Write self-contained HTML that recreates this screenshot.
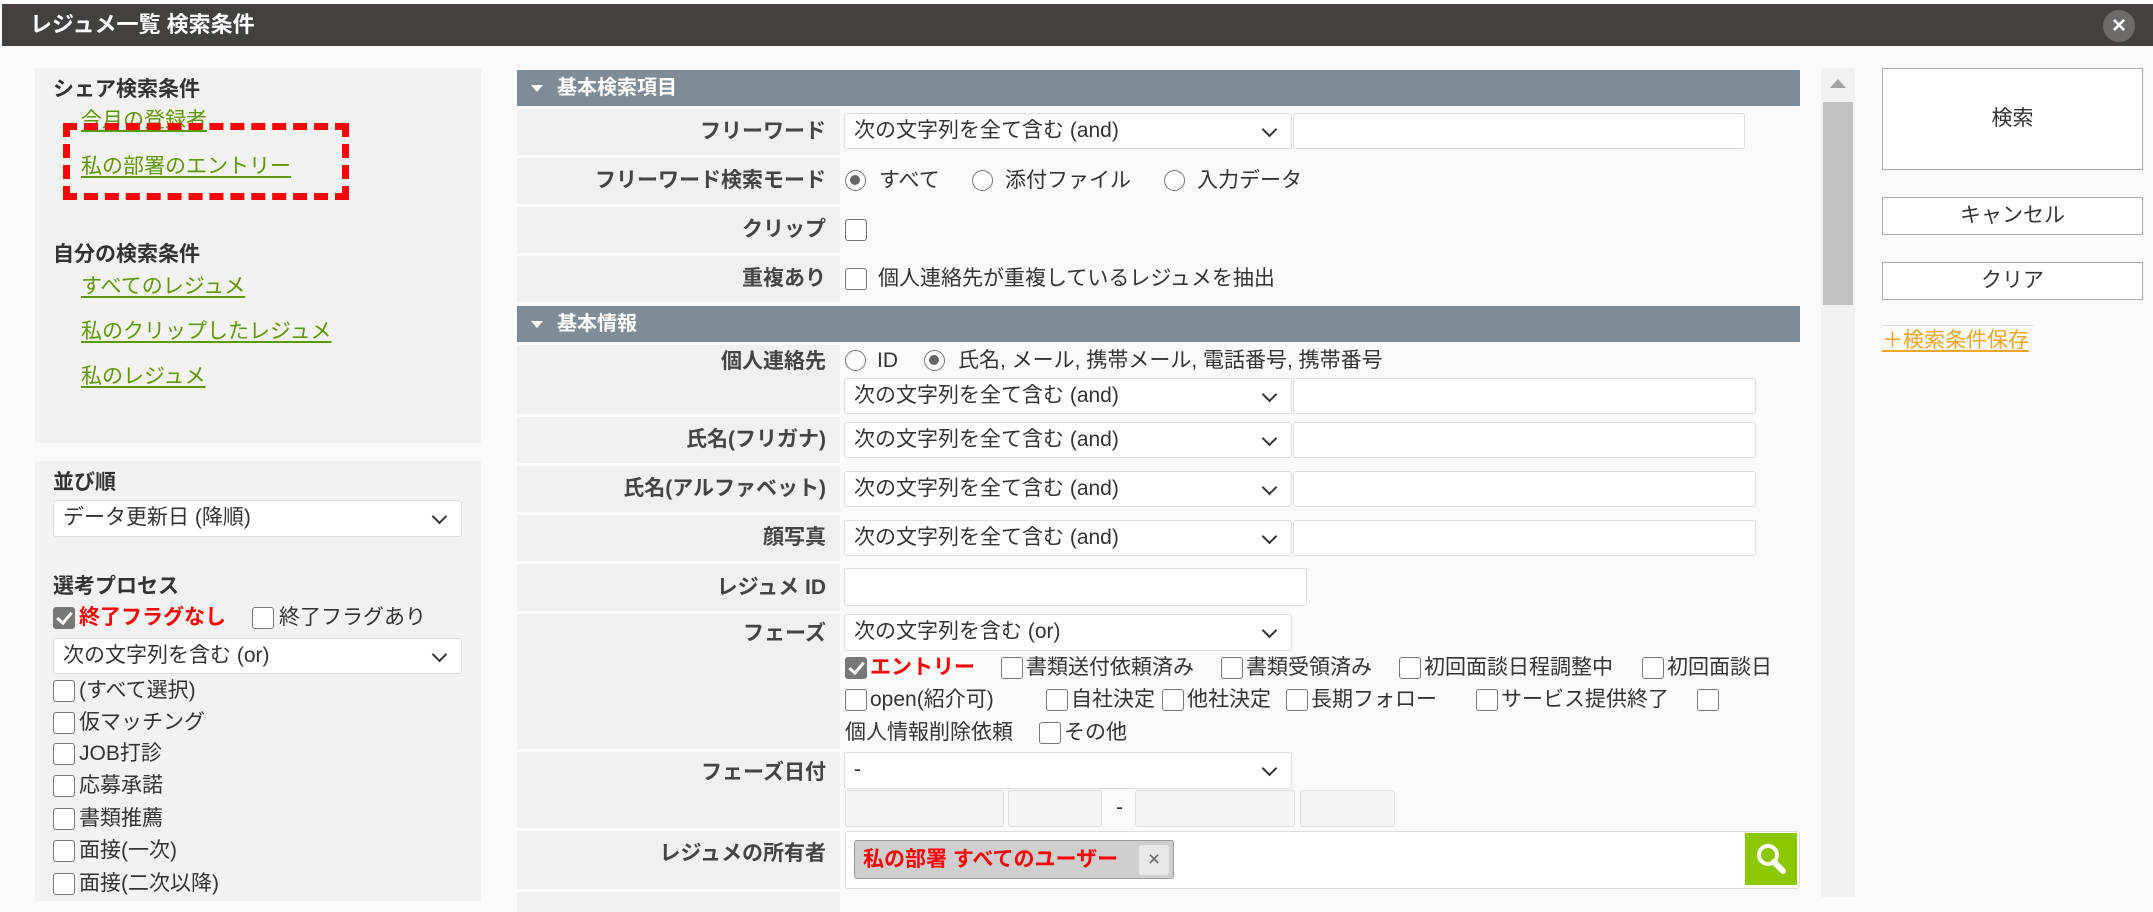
<!DOCTYPE html>
<html><head><meta charset="utf-8"><style>
*{box-sizing:border-box;margin:0;padding:0}
body{width:2153px;height:897px;overflow:hidden;background:#fafafa;font-family:"Liberation Sans","Noto Sans CJK JP",sans-serif;font-size:21px;color:#333;position:relative}
.a{position:absolute;white-space:nowrap}
.t{line-height:22px}
.lk{color:#5f9700;text-decoration:underline;text-underline-offset:3px}
.b{font-weight:bold}
.hdr{position:absolute;left:517px;width:1283px;height:36px;background:#7f8c97;color:#fff;font-weight:bold;font-size:20px;line-height:36px;padding-left:40px}
.hdr:before{content:"";position:absolute;left:14px;top:15px;border-left:6px solid transparent;border-right:6px solid transparent;border-top:7px solid #fff}
.lab{position:absolute;left:517px;width:323px;background:#f0f0f0;text-align:right;padding-right:14px;font-weight:bold;color:#444}
.sel{position:absolute;background:#fff;border:1px solid #ddd;border-radius:3px;padding-left:9px;line-height:34px;height:36px;color:#333}
.sel:after{content:"";position:absolute;right:16px;top:10px;width:9px;height:9px;border-right:2px solid #333;border-bottom:2px solid #333;transform:rotate(45deg)}
.inp{position:absolute;background:#fff;border:1px solid #ddd;border-radius:3px;height:36px}
.cb{position:absolute;width:22px;height:22px;border:1.5px solid #777;border-radius:3px;background:#fff}
.cb.on{background:#777;border-color:#777}
.cb.on:after{content:"";position:absolute;left:6px;top:1px;width:6px;height:12px;border-right:3px solid #fff;border-bottom:3px solid #fff;transform:rotate(40deg)}
.rd{position:absolute;width:21px;height:21px;border:1.5px solid #777;border-radius:50%;background:#fff}
.rd.on:after{content:"";position:absolute;left:4px;top:4px;width:10px;height:10px;border-radius:50%;background:#666}
.btn{position:absolute;left:1882px;width:261px;border:1.5px solid #aaa;background:#fff;text-align:center;color:#333}
</style></head><body>
<div class="a" style="left:2px;top:4px;width:2151px;height:42px;background:#454040"></div>
<div class="a b" style="left:30px;top:9px;color:#fff;font-size:22px;line-height:32px">レジュメ一覧 検索条件</div>
<div class="a" style="left:2103px;top:10px;width:32px;height:32px;border-radius:50%;background:#6e6b6b;color:#fff;text-align:center;line-height:32px;font-size:24px;font-weight:bold">×</div>

<div class="a" style="left:35px;top:68px;width:446px;height:375px;background:#f2f2f2"></div>
<div class="a t b" style="left:53px;top:79px">シェア検索条件</div>
<div class="a t lk" style="left:81px;top:110px">今月の登録者</div>
<div class="a" style="left:63px;top:123px;width:286px;height:77px;border:7px dashed #f00"></div>
<div class="a t lk" style="left:81px;top:156px">私の部署のエントリー</div>
<div class="a t b" style="left:53px;top:244px">自分の検索条件</div>
<div class="a t lk" style="left:81px;top:276px">すべてのレジュメ</div>
<div class="a t lk" style="left:81px;top:321px">私のクリップしたレジュメ</div>
<div class="a t lk" style="left:81px;top:366px">私のレジュメ</div>

<div class="a" style="left:35px;top:461px;width:446px;height:440px;background:#f2f2f2"></div>
<div class="a t b" style="left:53px;top:472px">並び順</div>
<div class="sel" style="left:53px;top:500px;width:409px;height:37px">データ更新日 (降順)</div>
<div class="a t b" style="left:53px;top:576px">選考プロセス</div>
<div class="cb on" style="left:53px;top:607px"></div>
<div class="a t b" style="left:79px;top:607px;color:#f00">終了フラグなし</div>
<div class="cb" style="left:252px;top:607px"></div>
<div class="a t" style="left:279px;top:607px">終了フラグあり</div>
<div class="sel" style="left:53px;top:638px;width:409px">次の文字列を含む (or)</div>
<div class="cb" style="left:53px;top:680px"></div><div class="a t" style="left:79px;top:680px">(すべて選択)</div>
<div class="cb" style="left:53px;top:712px"></div><div class="a t" style="left:79px;top:712px">仮マッチング</div>
<div class="cb" style="left:53px;top:743px"></div><div class="a t" style="left:79px;top:743px">JOB打診</div>
<div class="cb" style="left:53px;top:775px"></div><div class="a t" style="left:79px;top:775px">応募承諾</div>
<div class="cb" style="left:53px;top:808px"></div><div class="a t" style="left:79px;top:808px">書類推薦</div>
<div class="cb" style="left:53px;top:840px"></div><div class="a t" style="left:79px;top:840px">面接(一次)</div>
<div class="cb" style="left:53px;top:873px"></div><div class="a t" style="left:79px;top:873px">面接(二次以降)</div>

<div class="hdr" style="top:70px">基本検索項目</div>
<div class="lab" style="top:109px;height:46px;line-height:46px">フリーワード</div>
<div class="sel" style="left:844px;top:113px;width:448px">次の文字列を全て含む (and)</div>
<div class="inp" style="left:1293px;top:113px;width:452px"></div>
<div class="lab" style="top:158px;height:46px;line-height:46px">フリーワード検索モード</div>
<div class="rd on" style="left:845px;top:170px"></div><div class="a t" style="left:879px;top:170px">すべて</div>
<div class="rd" style="left:972px;top:170px"></div><div class="a t" style="left:1005px;top:170px">添付ファイル</div>
<div class="rd" style="left:1164px;top:170px"></div><div class="a t" style="left:1197px;top:170px">入力データ</div>
<div class="lab" style="top:207px;height:46px;line-height:46px">クリップ</div>
<div class="cb" style="left:845px;top:219px"></div>
<div class="lab" style="top:256px;height:46px;line-height:46px">重複あり</div>
<div class="cb" style="left:845px;top:268px"></div><div class="a t" style="left:878px;top:268px">個人連絡先が重複しているレジュメを抽出</div>

<div class="hdr" style="top:306px">基本情報</div>
<div class="lab" style="top:345px;height:69px;line-height:32px;padding-top:1px">個人連絡先</div>
<div class="rd" style="left:845px;top:350px"></div><div class="a t" style="left:877px;top:350px">ID</div>
<div class="rd on" style="left:924px;top:350px"></div><div class="a t" style="left:958px;top:350px">氏名, メール, 携帯メール, 電話番号, 携帯番号</div>
<div class="sel" style="left:844px;top:378px;width:448px">次の文字列を全て含む (and)</div>
<div class="inp" style="left:1293px;top:378px;width:463px"></div>
<div class="lab" style="top:417px;height:46px;line-height:46px">氏名(フリガナ)</div>
<div class="sel" style="left:844px;top:422px;width:448px">次の文字列を全て含む (and)</div>
<div class="inp" style="left:1293px;top:422px;width:463px"></div>
<div class="lab" style="top:466px;height:46px;line-height:46px">氏名(アルファベット)</div>
<div class="sel" style="left:844px;top:471px;width:448px">次の文字列を全て含む (and)</div>
<div class="inp" style="left:1293px;top:471px;width:463px"></div>
<div class="lab" style="top:515px;height:46px;line-height:46px">顔写真</div>
<div class="sel" style="left:844px;top:520px;width:448px">次の文字列を全て含む (and)</div>
<div class="inp" style="left:1293px;top:520px;width:463px"></div>
<div class="lab" style="top:564px;height:47px;line-height:47px">レジュメ ID</div>
<div class="inp" style="left:844px;top:568px;width:463px;height:38px"></div>
<div class="lab" style="top:614px;height:135px;line-height:40px">フェーズ</div>
<div class="sel" style="left:844px;top:614px;width:448px;height:37px">次の文字列を含む (or)</div>
<div class="cb on" style="left:845px;top:657px"></div><div class="a t b" style="left:870px;top:657px;color:#f00">エントリー</div>
<div class="cb" style="left:1001px;top:657px"></div><div class="a t" style="left:1026px;top:657px">書類送付依頼済み</div>
<div class="cb" style="left:1221px;top:657px"></div><div class="a t" style="left:1246px;top:657px">書類受領済み</div>
<div class="cb" style="left:1399px;top:657px"></div><div class="a t" style="left:1424px;top:657px">初回面談日程調整中</div>
<div class="cb" style="left:1642px;top:657px"></div><div class="a t" style="left:1667px;top:657px">初回面談日</div>
<div class="cb" style="left:845px;top:689px"></div><div class="a t" style="left:870px;top:689px">open(紹介可)</div>
<div class="cb" style="left:1046px;top:689px"></div><div class="a t" style="left:1071px;top:689px">自社決定</div>
<div class="cb" style="left:1162px;top:689px"></div><div class="a t" style="left:1187px;top:689px">他社決定</div>
<div class="cb" style="left:1286px;top:689px"></div><div class="a t" style="left:1311px;top:689px">長期フォロー</div>
<div class="cb" style="left:1476px;top:689px"></div><div class="a t" style="left:1501px;top:689px">サービス提供終了</div>
<div class="cb" style="left:1697px;top:689px"></div>
<div class="a t" style="left:845px;top:722px">個人情報削除依頼</div>
<div class="cb" style="left:1039px;top:722px"></div><div class="a t" style="left:1064px;top:722px">その他</div>
<div class="lab" style="top:752px;height:76px;line-height:42px">フェーズ日付</div>
<div class="sel" style="left:844px;top:752px;width:448px;height:37px">-</div>
<div class="inp" style="left:845px;top:790px;width:159px;height:37px;background:#f4f4f4"></div>
<div class="inp" style="left:1008px;top:790px;width:94px;height:37px;background:#f4f4f4"></div>
<div class="a t" style="left:1116px;top:797px">-</div>
<div class="inp" style="left:1135px;top:790px;width:160px;height:37px;background:#f4f4f4"></div>
<div class="inp" style="left:1300px;top:790px;width:95px;height:37px;background:#f4f4f4"></div>
<div class="lab" style="top:831px;height:58px;line-height:46px">レジュメの所有者</div>
<div class="inp" style="left:845px;top:831px;width:955px;height:58px"></div>
<div class="a" style="left:854px;top:840px;width:320px;height:39px;background:#cfcfcf;border:1px solid #999;border-radius:3px"></div>
<div class="a t b" style="left:863px;top:849px;color:#f00">私の部署 すべてのユーザー</div>
<div class="a" style="left:1139px;top:845px;width:30px;height:30px;background:#e8e8e8;border-radius:3px;text-align:center;line-height:30px;color:#666">×</div>
<div class="a" style="left:1745px;top:833px;width:52px;height:52px;background:#8cc800">
<svg width="52" height="52"><circle cx="23" cy="22" r="9" fill="none" stroke="#fff" stroke-width="4"/><line x1="29" y1="29" x2="38" y2="38" stroke="#fff" stroke-width="6" stroke-linecap="round"/></svg></div>
<div class="lab" style="top:892px;height:20px"></div>

<div class="a" style="left:1821px;top:68px;width:34px;height:829px;background:#f2f2f2"></div>
<div class="a" style="left:1830px;top:79px;border-left:8px solid transparent;border-right:8px solid transparent;border-bottom:9px solid #a3a3a3"></div>
<div class="a" style="left:1823px;top:102px;width:30px;height:203px;background:#c1c1c1"></div>

<div class="btn" style="top:68px;height:102px;line-height:100px">検索</div>
<div class="btn" style="top:197px;height:38px;line-height:35px">キャンセル</div>
<div class="btn" style="top:262px;height:38px;line-height:35px">クリア</div>
<div class="a" style="left:1882px;top:325px;width:151px;height:1px;background:#ddd"></div>
<div class="a t" style="left:1882px;top:330px;color:#f5a623;text-decoration:underline;text-underline-offset:3px">＋検索条件保存</div>
</body></html>
